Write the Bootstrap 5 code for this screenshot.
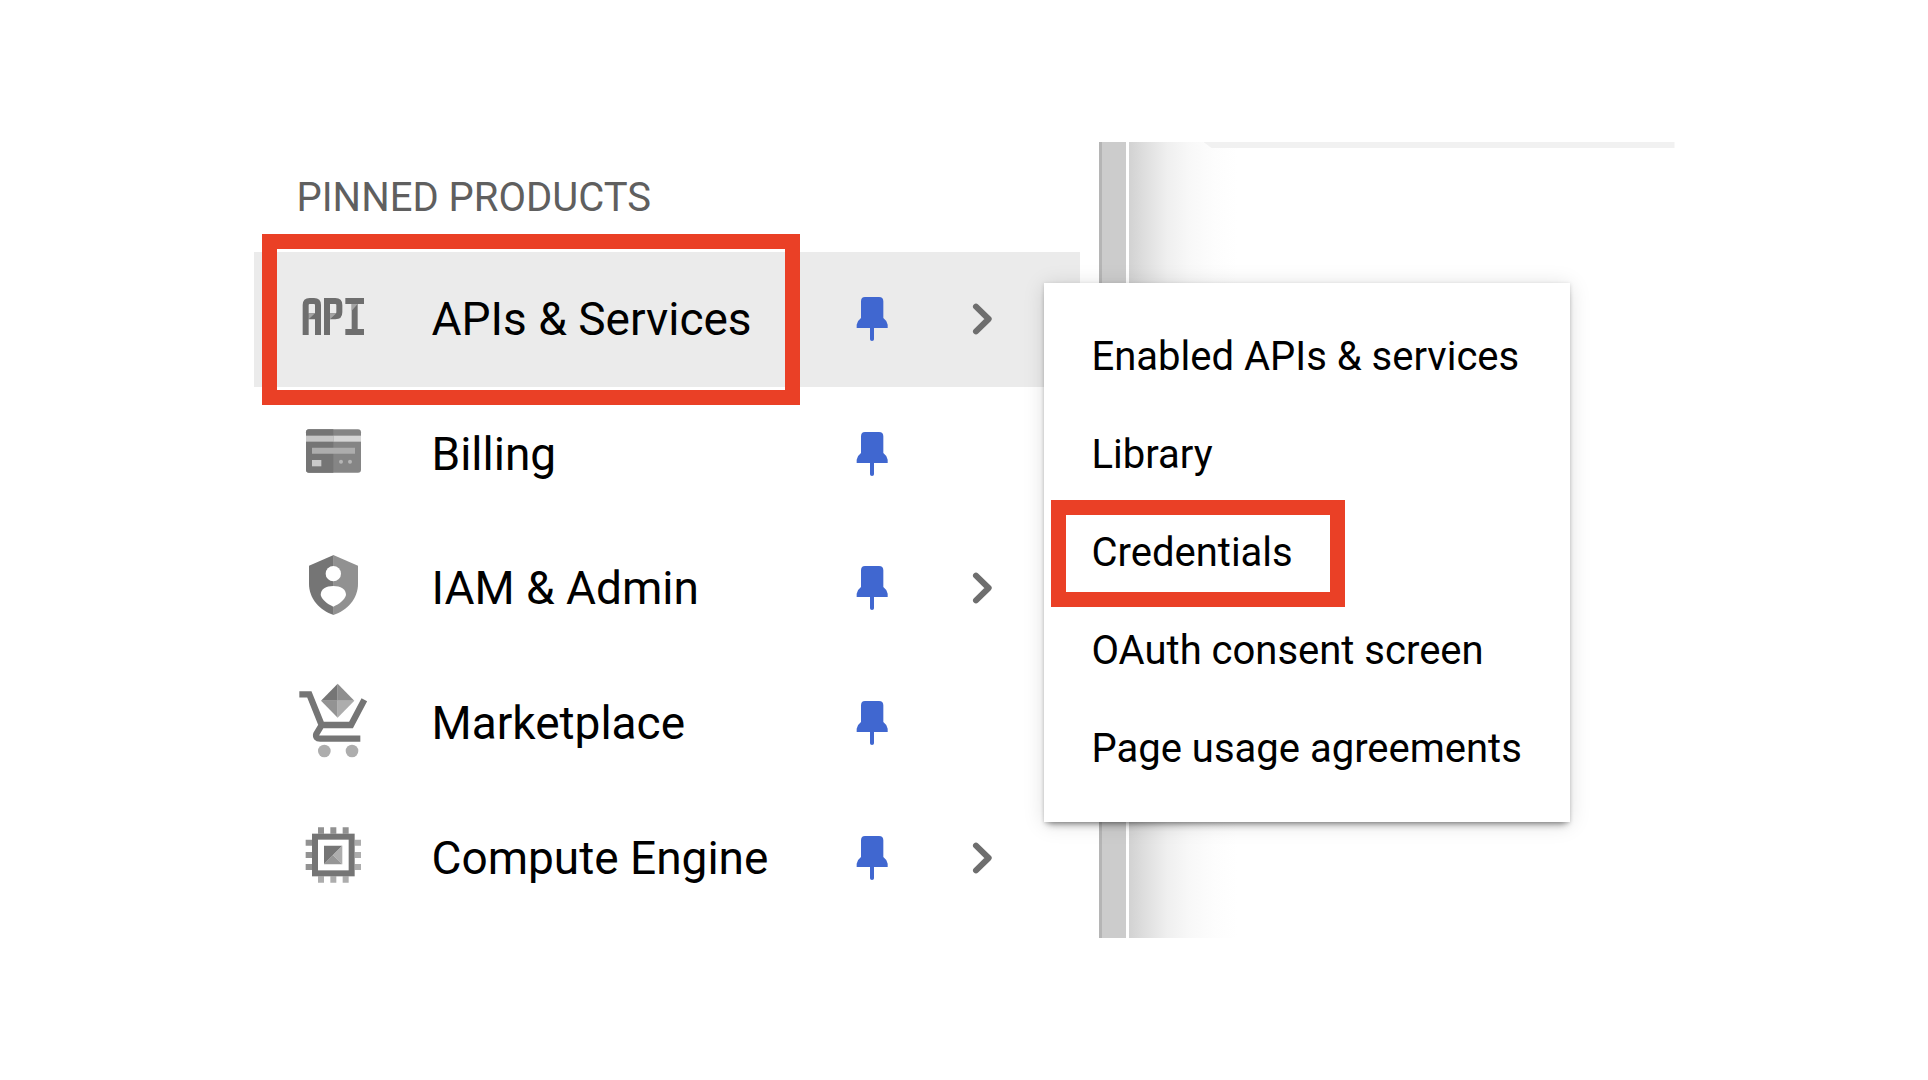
<!DOCTYPE html>
<html lang="en">
<head>
<meta charset="utf-8">
<meta name="viewport" content="width=device-width, initial-scale=1">
<title>Pinned products</title>
<link href="https://cdn.jsdelivr.net/npm/bootstrap@5.3.0/dist/css/bootstrap.min.css" rel="stylesheet">
<style>
  body { font-family: Roboto, "Liberation Sans", sans-serif; background: #fff; color: #000; }
  .console { max-width: 1421px; min-height: 796px; }
  .side-nav { width: 845px; padding: 0 19px 13px 0; }
  .side-title { font-size: 40px; line-height: 108px; padding: 2px 0 0 43px; color: #5f5f5f; font-weight: 400; }
  .product { padding: 0 86px 0 43px; font-size: 46px; line-height: 60px; color: #000; min-height: 100px; }
  .product:hover, .fly-item:hover { color: #000; }
  .product.current { background: #ebebeb; }
  .product-icon { width: 72px; height: 75px; margin-right: 63px; overflow: visible; }
  .pin-icon { width: 32px; height: 46px; margin-right: 82px; fill: #4067d0; }
  .more-icon { width: 24px; height: 36px; }
  .scroll-track { width: 30px; background: linear-gradient(90deg, #b5b5b5 3px, #ccc 3px, #ccc 27px, #fff 27px); }
  .page-area { background: linear-gradient(90deg, #d2d2d2 0, #e0e0e0 18px, #efefef 38px, #f8f8f8 60px, #fdfdfd 86px, #fff 108px); }
  .page-edge { height: 6px; margin-left: 75px; background: #f1f1f1; clip-path: polygon(0 0, 100% 0, 100% 100%, 8px 100%); }
  .flyout { left: 790px; top: 141px; width: 526px; padding: 25px 0 24px; background: #fff;
    box-shadow: 0 6px 7px -4px rgba(0,0,0,.4), 0 1px 4px rgba(0,0,0,.16), 0 2px 20px rgba(0,0,0,.13); }
  .fly-item { font-size: 40px; line-height: 98px; padding-left: 48px; color: #000; }
  .callout { border: 15px solid #ea4026; pointer-events: none; }
  .callout-product { left: 8px; width: 538px; top: -18px; bottom: -18px; }
  .callout-item { left: 7px; width: 294px; top: -4px; bottom: -5px; }
</style>
</head>
<body>
<svg class="d-none" aria-hidden="true">
  <symbol id="pin" viewBox="78 78 96 138">
    <path d="M105 81h42q13 0 13 13v50q11 8 13 20v10h-41v34q0 5-6 5t-6-5v-34H80v-10q2-12 13-20V94q0-13 12-13z"/>
  </symbol>
  <symbol id="more" viewBox="420 94 72 108">
    <path d="M438 111l38 37-38 37" fill="none" stroke="#6e6e6e" stroke-width="18" stroke-linecap="round" stroke-linejoin="round"/>
  </symbol>
</svg>

<div class="min-vh-100 d-flex align-items-center justify-content-center">
  <main class="console w-100 d-flex position-relative">
    <nav class="side-nav flex-shrink-0 d-flex flex-column" aria-label="Pinned products">
      <h1 class="side-title m-0">PINNED PRODUCTS</h1>

      <a href="#" class="product current flex-fill d-flex align-items-center text-decoration-none position-relative">
        <svg class="product-icon flex-shrink-0" viewBox="51 6 216 225" aria-hidden="true">
          <g fill="none" stroke="#6e6e6e" stroke-width="18">
            <path d="M77 165V75q0-12 12-12h13q12 0 12 12v90M86 109h20"/>
            <path d="M141 165V63h25q12 0 12 12v22q0 12-12 12h-16"/>
            <path d="M196 63h56M224 63v93M196 156h56"/>
          </g>
          <path fill="#a3a3a3" d="M86 100h19l-19 18zM150 100h19l-19 18zM215 72h18l-18 20z"/>
        </svg>
        <span class="flex-grow-1">APIs &amp; Services</span>
        <svg class="pin-icon flex-shrink-0" aria-hidden="true"><use href="#pin"/></svg>
        <svg class="more-icon flex-shrink-0" aria-hidden="true"><use href="#more"/></svg>
        <span class="callout callout-product position-absolute"></span>
      </a>

      <a href="#" class="product flex-fill d-flex align-items-center text-decoration-none">
        <svg class="product-icon flex-shrink-0" viewBox="51 19 216 225" aria-hidden="true">
          <rect x="78" y="59" width="165" height="130" rx="9" fill="#858585"/>
          <path fill="#757575" d="M160 59H87q-9 0-9 9v112q0 9 9 9h73z"/>
          <path fill="#c6c6c6" d="M78 78h82v18H78z"/><path fill="#d6d6d6" d="M160 78h83v18h-83z"/>
          <path fill="#adadad" d="M96 114h129v18H96z"/>
          <path fill="#c9c9c9" d="M96 151h28v19H96z"/>
          <circle cx="183" cy="156" r="6" fill="#b5b5b5"/><circle cx="210" cy="156" r="6" fill="#b5b5b5"/>
        </svg>
        <span class="flex-grow-1">Billing</span>
        <svg class="pin-icon flex-shrink-0" aria-hidden="true"><use href="#pin"/></svg>
        <span class="more-icon flex-shrink-0"></span>
      </a>

      <a href="#" class="product flex-fill d-flex align-items-center text-decoration-none">
        <svg class="product-icon flex-shrink-0" viewBox="51 33 216 225" aria-hidden="true">
          <path fill="#757575" d="M161 45L87 77v55c0 43 32 80 74 93z"/>
          <path fill="#919191" d="M160 45l74 32v55c0 43-32 80-74 93z"/>
          <circle cx="160" cy="101" r="23" fill="#fff"/>
          <path fill="#fff" d="M160 138c22 0 38 9 38 27-5 16-20 27-38 35-18-8-33-19-38-35 0-18 16-27 38-27z"/>
        </svg>
        <span class="flex-grow-1">IAM &amp; Admin</span>
        <svg class="pin-icon flex-shrink-0" aria-hidden="true"><use href="#pin"/></svg>
        <svg class="more-icon flex-shrink-0" aria-hidden="true"><use href="#more"/></svg>
      </a>

      <a href="#" class="product flex-fill d-flex align-items-center text-decoration-none">
        <svg class="product-icon flex-shrink-0" viewBox="51 48 216 225" aria-hidden="true">
          <path d="M58 73h30l37 92h88l40-76M125 165l-16 27q-4 13 12 14h120" fill="none" stroke="#757575" stroke-width="19"/>
          <path fill="#757575" d="M173 41v51h-50z"/><path fill="#8e8e8e" d="M173 41l50 51h-50z"/>
          <path fill="#939393" d="M123 92h50v51z"/><path fill="#adadad" d="M173 92h50l-50 51z"/>
          <circle cx="133" cy="243" r="19" fill="#adadad"/><circle cx="216" cy="243" r="19" fill="#adadad"/>
        </svg>
        <span class="flex-grow-1">Marketplace</span>
        <svg class="pin-icon flex-shrink-0" aria-hidden="true"><use href="#pin"/></svg>
        <span class="more-icon flex-shrink-0"></span>
      </a>

      <a href="#" class="product flex-fill d-flex align-items-center text-decoration-none">
        <svg class="product-icon flex-shrink-0" viewBox="51 31 216 225" aria-hidden="true">
          <path fill="#929292" d="M114 53h18v19h-18zM151 53h18v19h-18zM188 53h18v19h-18zM77 90h19v18H77zM77 127h19v18H77zM77 163h19v18H77z"/>
          <path fill="#adadad" d="M114 200h18v19h-18zM151 200h18v19h-18zM188 200h18v19h-18zM224 90h19v18h-19zM224 127h19v18h-19zM224 163h19v18h-19z"/>
          <rect x="105" y="81" width="110" height="110" fill="#fff" stroke="#757575" stroke-width="18"/>
          <path fill="#757575" d="M132 108h55l-55 56z"/><path fill="#adadad" d="M187 108v56l-28-28z"/><path fill="#969696" d="M132 164l27-28 28 28z"/>
        </svg>
        <span class="flex-grow-1">Compute Engine</span>
        <svg class="pin-icon flex-shrink-0" aria-hidden="true"><use href="#pin"/></svg>
        <svg class="more-icon flex-shrink-0" aria-hidden="true"><use href="#more"/></svg>
      </a>
    </nav>

    <div class="scroll-track flex-shrink-0"></div>
    <section class="page-area flex-grow-1"><div class="page-edge"></div></section>

    <!-- Submenu of the highlighted product -->
    <nav class="flyout position-absolute d-flex flex-column" aria-label="APIs &amp; Services">
      <a href="#" class="fly-item text-decoration-none">Enabled APIs &amp; services</a>
      <a href="#" class="fly-item text-decoration-none">Library</a>
      <a href="#" class="fly-item text-decoration-none position-relative">Credentials<span class="callout callout-item position-absolute"></span></a>
      <a href="#" class="fly-item text-decoration-none">OAuth consent screen</a>
      <a href="#" class="fly-item text-decoration-none">Page usage agreements</a>
    </nav>
  </main>
</div>
<script src="https://cdn.jsdelivr.net/npm/bootstrap@5.3.0/dist/js/bootstrap.bundle.min.js"></script>
</body>
</html>
